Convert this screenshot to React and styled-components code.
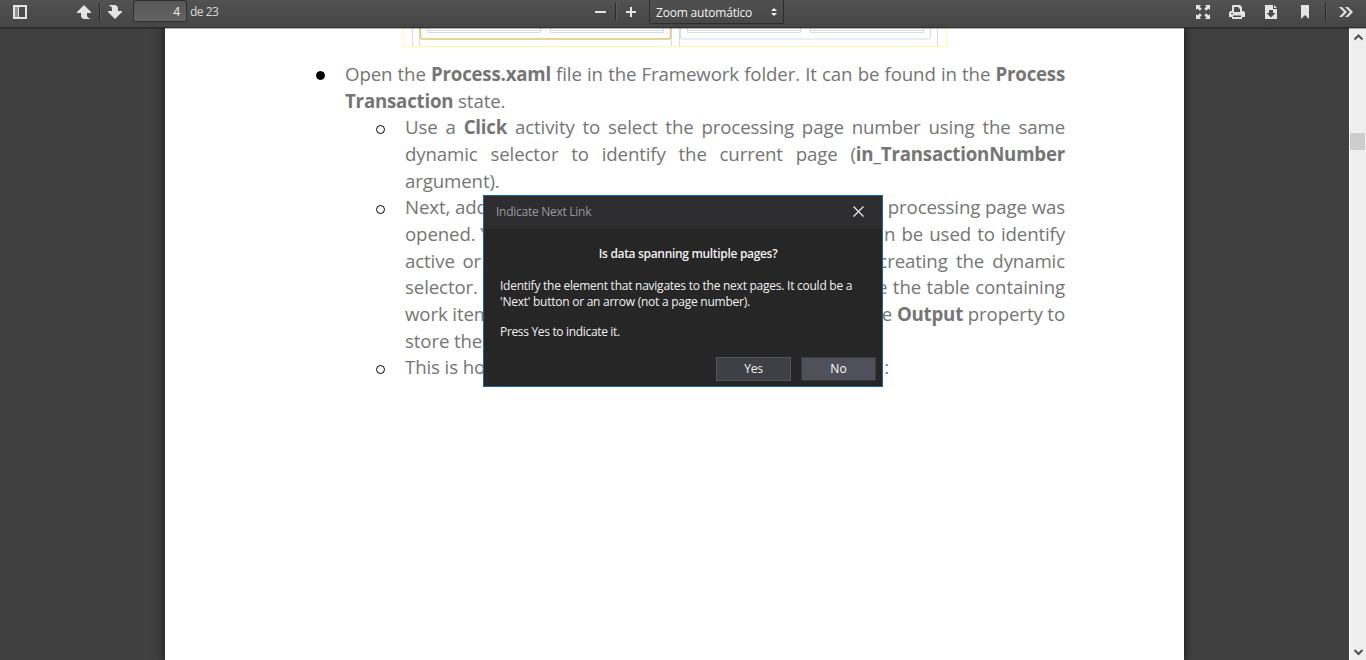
import React from "react";
import styled, { createGlobalStyle } from "styled-components";

const Global = createGlobalStyle`
  * { box-sizing: border-box; }
  html, body { margin: 0; padding: 0; }
  body { width: 1366px; height: 660px; overflow: hidden; background: #404040; }
`;

const ui = `"Open Sans", "Noto Sans", sans-serif`;

const Viewer = styled.div`
  position: relative;
  display: flex;
  flex-direction: column;
  width: 1366px;
  height: 660px;
  overflow: hidden;
  font-family: ${ui};
`;

const Toolbar = styled.header`
  display: flex;
  flex: none;
  justify-content: space-between;
  height: 28px;
  background: linear-gradient(#525252, #454545);
  border-bottom: 1px solid #303030;
  position: relative;
  z-index: 1;
  box-shadow: 0 1px 0 rgba(0, 0, 0, 0.3);
`;

const Group = styled.div`
  display: flex;
  flex: none;
  align-items: flex-start;
  height: 27px;
  padding-left: ${(p) => p.$start || 0}px;
  width: ${(p) => p.$width}px;
`;

const Tool = styled.button`
  flex: none;
  display: block;
  width: 16px;
  height: 16px;
  padding: 0;
  border: 0;
  background: none;
  color: #e4e4e4;
  margin: 4px 0 0 ${(p) => p.$gap || 0}px;
  svg { display: block; }
`;

const Separator = styled.i`
  flex: none;
  width: 2px;
  height: 18px;
  margin: 3px 0 0 ${(p) => p.$gap}px;
  background: #2b2b2b;
  border-right: 1px solid #5a5a5a;
`;

const PageNumber = styled.div`
  flex: none;
  width: 54px;
  height: 22px;
  margin-left: 10px;
  padding-right: 6px;
  border: 1px solid #303030;
  border-radius: 2px;
  background: linear-gradient(#565656, #646464);
  color: #f2f2f2;
  font-size: 12px;
  line-height: 22px;
  text-align: right;
`;

const PageTotal = styled.span`
  margin-left: 3px;
  color: #d9d9d9;
  font-size: 12px;
  line-height: 24px;
  letter-spacing: -0.5px;
  white-space: nowrap;
`;

const ZoomSelect = styled.div`
  display: flex;
  justify-content: space-between;
  flex: none;
  width: 135px;
  height: 24px;
  margin-left: 10px;
  padding: 0 6px 0 6px;
  border: 1px solid #2d2d2d;
  border-top: 0;
  border-radius: 0 0 2px 2px;
  background: linear-gradient(#505050, #484848);
  color: #f2f2f2;
  font-size: 12px;
  line-height: 26px;
  letter-spacing: -0.2px;
  white-space: nowrap;
  svg { margin-top: 8px; }
`;

const Main = styled.main`
  display: flex;
  flex: 1;
  min-height: 0;
  background: #404040;
`;

const Canvas = styled.div`
  display: flex;
  flex: 1;
  padding-left: 165px;
`;

const Page = styled.article`
  width: 1019px;
  background: #fff;
  box-shadow: 0 0 9px 1px rgba(0, 0, 0, 0.6);
  color: #757575;
  font: 18.67px/26.67px "Open Sans", sans-serif;
  letter-spacing: -0.12px;
  b { letter-spacing: -0.2px; }
`;

const Figure = styled.svg`
  display: block;
  margin-left: 238px;
`;

const Copy = styled.div`
  padding: 14px 0 0 180px;
`;

const Item = styled.div`
  position: relative;
  width: ${(p) => (p.$nested ? 660 : 720)}px;
  margin-left: ${(p) => (p.$nested ? 60 : 0)}px;
`;

const Bullet = styled.i`
  position: absolute;
  left: -29px;
  top: ${(p) => (p.$open ? 11 : 10)}px;
  width: 9px;
  height: 9px;
  border-radius: 50%;
  border: 1px solid #000;
  background: ${(p) => (p.$open ? "transparent" : "#000")};
`;

const Line = styled.div`
  display: flex;
  justify-content: space-between;
  height: 26.67px;
  white-space: nowrap;
`;

const Run = styled.span`
  display: block;
  flex: ${(p) => (p.$full ? 1 : "none")};
  text-align-last: ${(p) => (p.$full ? "justify" : "left")};
  white-space: ${(p) => (p.$full ? "normal" : "nowrap")};
  word-spacing: ${(p) => p.$space || 0}px;
  margin-right: ${(p) => p.$end || 0}px;
`;

const ScrollTrack = styled.aside`
  display: flex;
  flex-direction: column;
  align-items: center;
  width: 17px;
  border-left: 1px solid #fff;
  background: #efefef;
  svg { display: block; flex: none; }
`;

const Thumb = styled.div`
  width: 15px;
  height: 17px;
  margin: 90px 1px auto 0;
  background: #cdcdcd;
`;

const Dialog = styled.section`
  position: absolute;
  z-index: 2;
  left: 483px;
  top: 195px;
  width: 400px;
  height: 192px;
  display: flex;
  flex-direction: column;
  border: 1px solid #1767a5;
  background: #262626;
  color: #f1f1f1;
  font-size: 12px;
  line-height: 16px;
`;

const TitleBar = styled.div`
  display: flex;
  justify-content: space-between;
  height: 33px;
  padding: 8px 18px 0 12px;
  background: #2d2d30;
  color: #999;
  svg { margin-top: 2px; }
`;

const Title = styled.span`
  letter-spacing: -0.27px;
`;

const Heading = styled.h1`
  margin: 17px 0 16px;
  padding-left: 10px;
  font-size: 12px;
  line-height: 16px;
  font-weight: 600;
  text-align: center;
  letter-spacing: -0.32px;
`;

const Message = styled.p`
  margin: 0 0 14px 16px;
  white-space: nowrap;
  letter-spacing: ${(p) => p.$track || -0.25}px;
`;

const Actions = styled.div`
  display: flex;
  justify-content: flex-end;
  gap: 10px;
  margin-top: 3px;
  padding-right: 6px;
`;

const Button = styled.button`
  width: 75px;
  height: 24px;
  padding: 0;
  border: 1px solid ${(p) => (p.$focus ? "#3a3a3d" : "#555558")};
  background: ${(p) => (p.$focus ? "#50505a" : "#3f3f46")};
  color: ${(p) => (p.$focus ? "#fff" : "#f1f1f1")};
  font: 12px/20px ${ui};
  letter-spacing: ${(p) => (p.$focus ? 0 : -0.3)}px;
`;

const Svg = ({ children, w = 16, h = 16 }) => (
  <svg width={w} height={h} viewBox={`0 0 ${w} ${h}`} fill="currentColor">{children}</svg>
);

const SidebarIcon = () => (
  <Svg><path fillRule="evenodd" d="M1 1h14v14H1zM3 3v10h3V3zM7 3v10h6V3z" /><path d="M3 3h3v10H3z" opacity=".45" /></Svg>
);
const UpIcon = () => (
  <Svg><path d="M8 1l7 7v1h-4v2c0 2 1 3.200 3 3.500V15H9c-3 0-4-1.500-4-4V9H1V8z" /></Svg>
);
const DownIcon = () => (
  <Svg><path d="M8 15l7-7V7h-4V5c0-3-1.500-4-4-4H2v.5C4 2 5 3 5 5v2H1v1z" /></Svg>
);
const MinusIcon = () => <Svg><path d="M3 7h11v2H3z" /></Svg>;
const PlusIcon = () => <Svg><path d="M7 3h2v4h4v2H9v4H7V9H3V7h4z" /></Svg>;
const ExpandIcon = () => (
  <Svg>
    {[0, 90, 180, 270].map((a) => (
      <path key={a} transform={`rotate(${a} 8 8)`} d="M1 1h5L4.500 2.500 6.700 4.800 4.800 6.700 2.500 4.500 1 6z" />
    ))}
  </Svg>
);
const PrintIcon = () => (
  <Svg><path fillRule="evenodd" d="M4 1h7l2 2v4h1.500L16 8.500V13h-3v2H3v-2H0V8.500L1.500 7H3V2zM5 3v5h6V4.500H9.500V3zM4 11.500V13h8v-1.500zM2 9v1h2V9z" /></Svg>
);
const DownloadIcon = () => (
  <Svg><path fillRule="evenodd" d="M2 1h8v4h4v10H2zM6 6v3H3.500L8 13.500 12.500 9H10V6z" /><path d="M11 1l3 3h-3z" /></Svg>
);
const BookmarkIcon = () => <Svg><path d="M4 1h8v14l-4-4-4 4z" /></Svg>;
const MoreIcon = () => (
  <Svg><path d="M1 3h3l5 5-5 5H1l5-5zM7 3h3l5 5-5 5H7l5-5z" /></Svg>
);

const Snippet = () => (
  <Figure width="546" height="19" viewBox="0 0 546 19" fill="none">
    <g stroke="#d6dbe8" strokeWidth="1">
      <path d="M9.500 0v18M16.500 0v18M268.500 0v18M276.500 0v18M534.500 0v18" />
      <path d="M24.500 0v4.500h113V0M147.500 0v4.500h113V0M284.500 0v4.500h113V0M407.500 0v4.500h113V0" />
      <path d="M25 2.500h112M148 2.500h112M285 2.500h112M408 2.500h112" />
      <path d="M277.500 0v9q0 2 2 2h246q2 0 2-2V0" />
    </g>
    <path d="M17.500 0v9q0 2 2 2h246q2 0 2-2V0" stroke="#e6c66f" strokeWidth="1.400" />
    <path d="M.5 0v18.500h543V0" stroke="#ffffa6" />
  </Figure>
);

export default function App() {
  return (
    <Viewer>
      <Global />
      <Toolbar>
        <Group $start={12} $width={592}>
          <Tool><SidebarIcon /></Tool>
          <Tool $gap={48}><UpIcon /></Tool>
          <Separator $gap={7} />
          <Tool $gap={6}><DownIcon /></Tool>
          <PageNumber>4</PageNumber>
          <PageTotal>de 23</PageTotal>
        </Group>
        <Group $width={603}>
          <Tool><MinusIcon /></Tool>
          <Separator $gap={7} />
          <Tool $gap={6}><PlusIcon /></Tool>
          <ZoomSelect>
            Zoom automático
            <Svg w={6} h={9}><path d="M3 0l3 3H0zM0 5h6L3 8z" /></Svg>
          </ZoomSelect>
        </Group>
        <Group $width={171}>
          <Tool><ExpandIcon /></Tool>
          <Tool $gap={18}><PrintIcon /></Tool>
          <Tool $gap={18}><DownloadIcon /></Tool>
          <Tool $gap={18}><BookmarkIcon /></Tool>
          <Separator $gap={12} />
          <Tool $gap={11}><MoreIcon /></Tool>
        </Group>
      </Toolbar>
      <Main>
        <Canvas>
          <Page>
            <Snippet />
            <Copy>
              <Item>
                <Bullet />
                <Line><Run $full>Open the <b>Process.xaml</b> file in the Framework folder. It can be found in the <b>Process</b></Run></Line>
                <Line><Run><b>Transaction</b> state.</Run></Line>
              </Item>
              <Item $nested>
                <Bullet $open />
                <Line><Run $full>Use a <b>Click</b> activity to select the processing page number using the same</Run></Line>
                <Line><Run $full>dynamic selector to identify the current page (<b>in_TransactionNumber</b></Run></Line>
                <Line><Run>argument).</Run></Line>
              </Item>
              <Item $nested>
                <Bullet $open />
                <Line><Run>Next, add</Run><Run>processing page was</Run></Line>
                <Line><Run>opened. Y</Run><Run $space={1.4}>can be used to identify</Run></Line>
                <Line><Run $space={3}>active or</Run><Run $space={3.5}>creating the dynamic</Run></Line>
                <Line><Run>selector.</Run><Run $space={0.8}>e the table containing</Run></Line>
                <Line><Run>work item</Run><Run>e <b>Output</b> property to</Run></Line>
                <Line><Run>store the</Run></Line>
              </Item>
              <Item $nested>
                <Bullet $open />
                <Line><Run>This is how</Run><Run $end={176}>:</Run></Line>
              </Item>
            </Copy>
          </Page>
        </Canvas>
        <ScrollTrack>
          <Svg w={15} h={15}><path d="M3.500 11.500l4-4 4 4" fill="none" stroke="#505050" strokeWidth="2" /></Svg>
          <Thumb />
          <Svg w={15} h={15}><path d="M3.500 5l4 4 4-4" fill="none" stroke="#505050" strokeWidth="2" /></Svg>
        </ScrollTrack>
      </Main>
      <Dialog>
        <TitleBar>
          <Title>Indicate Next Link</Title>
          <Svg w={11} h={11}><path d="M.5.5l10 10M10.500.5l-10 10" stroke="#eee" strokeWidth="1.200" /></Svg>
        </TitleBar>
        <Heading>Is data spanning multiple pages?</Heading>
        <Message>Identify the element that navigates to the next pages. It could be a<br />'Next' button or an arrow (not a page number).</Message>
        <Message $track={-0.33}>Press Yes to indicate it.</Message>
        <Actions>
          <Button>Yes</Button>
          <Button $focus>No</Button>
        </Actions>
      </Dialog>
    </Viewer>
  );
}
